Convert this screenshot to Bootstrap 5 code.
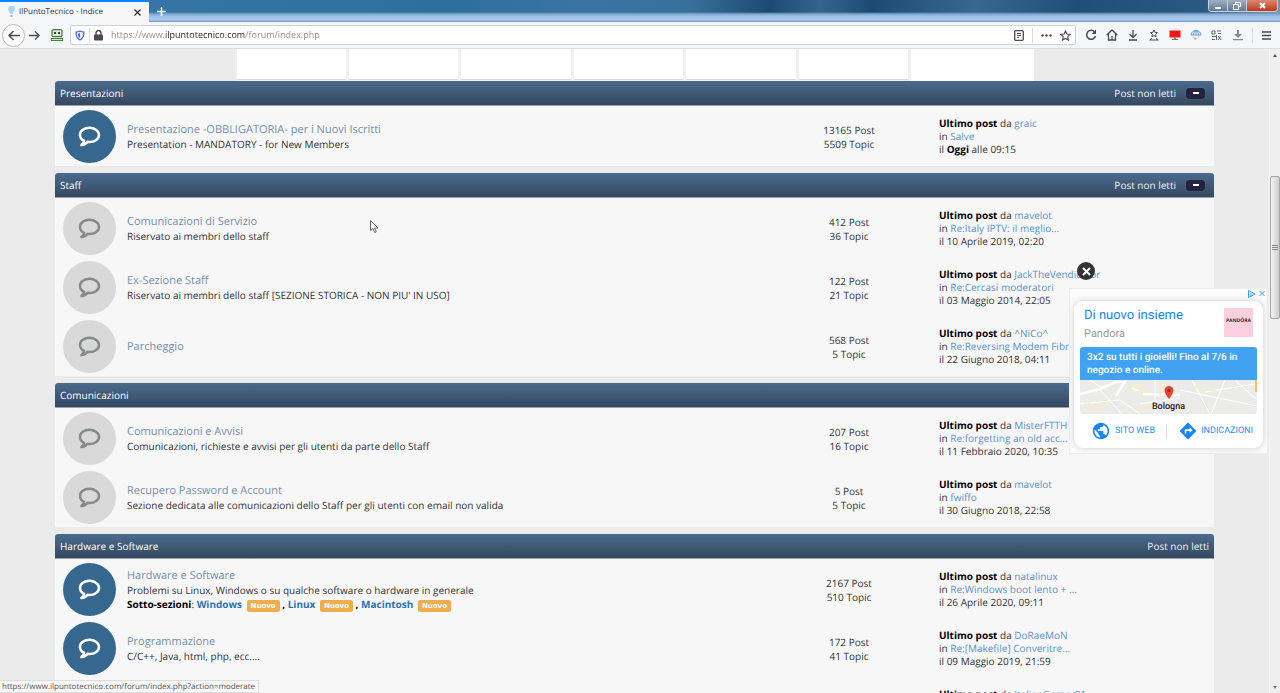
<!DOCTYPE html>
<html lang="it">
<head>
<meta charset="utf-8">
<meta name="viewport" content="width=device-width, initial-scale=1">
<title>IlPuntoTecnico - Indice</title>
<link href="https://cdn.jsdelivr.net/npm/bootstrap@5.3.0/dist/css/bootstrap.min.css" rel="stylesheet">
<style>
body{font-family:"Open Sans","Noto Sans",sans-serif;font-size:10px;line-height:14px;color:#333;background:#ebebeb;text-rendering:geometricPrecision}
a{text-decoration:none}
/* browser frame */
.titlebar{height:22px;background:linear-gradient(180deg,transparent 0 12px,#7fa6cf 14px,#a6c6ec 17px,#a6c6ec 20px,#6f97c2 22px),linear-gradient(100deg,#3a78a8 0,#2d6f9f 35%,#3a74a5 46%,#36709a 54%,#1d4a73 60%,#33658f 64%,#1d4a73 68%,#39688f 76%,#1f4f78 84%,#2a5a82 94%,#7b93ac 100%)}
.tab{width:149px;background:#f5f6f7;border-top:2px solid #0a84ff;color:#333;font-size:8px;padding-left:8px}
.plain{border:0;background:none;padding:0;line-height:1;color:inherit;display:inline-flex;align-items:center;justify-content:center}
.winbtns{height:12px;margin-right:2px;border:1px solid #c5d0dc;border-top:0;border-radius:0 0 4px 4px;overflow:hidden}
.winbtns button{width:19px;background:linear-gradient(#9fb0c4,#5f7891);border-right:1px solid #c5d0dc}
.winbtns .quit{width:30px;background:linear-gradient(#d98a72,#bd3a1c);border-right:0}
.toolbar{height:27px;padding-left:2px;background:#f5f6f7;border-bottom:1px solid #dcdcdc;color:#4a4a4f}
.backbtn{width:23px;height:23px;border:1px solid #b9b9ba;border-radius:50%;background:#fcfcfc}
.addon{margin:0 7px 0 11px}
.urlbox{height:20px;border:1px solid #d2d2d4;border-radius:2px;background:#fff}
.urltext{min-width:0;border:0;outline:0;font:9px/14px "Open Sans",sans-serif;padding:0;color:transparent;background:linear-gradient(90deg,#8a8a8a 54px,#222 54px,#222 134px,#8a8a8a 134px);-webkit-background-clip:text;background-clip:text}
.vline{width:1px;height:15px;background:#dcdcdc}
.toolbar svg{display:block}
.tools{padding-left:4px}
.tools .plain{width:21px}
.tools .vline{margin-left:4px}
.tools .menu{width:27px}
/* page */
.strip{width:63%;height:32px;background:#f0f0f0;gap:3px;padding-left:2px}
.strip div{flex:110;background:#fff;height:31px;border-bottom:1px solid #d8d8d8}
.strip div:last-child{flex:124;height:32px;border:0}
.board{padding:0 55px}
.forum{margin-bottom:7px;background:#f7f7f7}
.bar{height:25px;padding:0 5px;border-radius:3px 3px 0 0;border-bottom:1px solid #9aa3ad;background:linear-gradient(#4b6b8e,#34485f);color:#fff;font-weight:500}
.bar h2{font-size:10px;font-weight:500;margin:0;line-height:14px}
.bar a{color:#f0f3f6}
.fold{width:19px;height:11px;margin:0 4px 0 10px;border:0;border-radius:3px;background:#23233f;box-shadow:0 0 1px #7d92a8;padding:0}
.fold i{display:block;width:6px;height:2px;margin:auto;background:#fff}
.rows{table-layout:fixed;width:100%;margin-top:1px;color:#333}
.rows td{height:59px;padding:0;vertical-align:middle}
.c-icon{width:72px}.c-stat{width:180px}.c-last{width:275px}
.disc{width:53px;height:53px;margin-left:8px;border-radius:50%;background:#d9d9d9;color:#868a88}
.disc.on{background:#36688f;color:#fff}
.topic{font-size:11px;color:#7590ab}
.last{line-height:13px;white-space:nowrap}
.last a{color:#5b93c9}
b{color:#000}
b a{color:#2d73b3}
.tagnew{display:inline-block;background:#f0ad4e;color:#fff;font:bold 7px/12px "DejaVu Sans",sans-serif;padding:0 4px;border-radius:2px;margin-left:2px}
/* scrollbar */
.scroller{width:11px;background:#efefef;border-left:1px solid #f7f7f7}
.above{flex:115}
.below{flex:362}
.thumb{height:143px;border:1px solid #a5a5a5;border-radius:2px;background:linear-gradient(90deg,#f3f3f3,#cfcfcf)}
/* overlays */
.advert{right:12px;top:239px;width:199px;height:166px;background:#fbfbfb;border:1px solid #eee;font-family:Roboto,sans-serif;z-index:2}
.adcard{border-radius:9px;background:#fff;box-shadow:0 0 6px #ccc;margin:0 4px;padding:7px 6px 0}
.adhead{font-size:13px;line-height:16px;color:#1287f5}
.adsub{font-size:11px;color:#999;line-height:19px}
.brandbox{width:29px;height:29px;background:#fbcfe0;color:#333;font:bold 5px/5px "Open Sans",sans-serif;padding-bottom:3px}
.promo{background:#42a2f2;color:#fff;font-size:10px;font-weight:500;line-height:13px;padding:4px 7px 3px;border-radius:3px 3px 0 0}
.mapbox{height:34px;background:#ebebe9;border-radius:0 0 3px 3px;overflow:hidden}
.mappin{top:6px}
.mapname{font-size:9px;font-weight:500;color:#222;line-height:11px;bottom:1px}
.adlinks a{font-size:9px;color:#2a8ff5;flex:1}
.shut{right:185px;top:213px;width:18px;height:18px;border-radius:50%;background:#333;z-index:3;color:#fff}
.status{left:0;bottom:0;height:13px;padding:0 3px 0 2px;background:#f7f7f7;border:1px solid #ddd;border-left:0;font-size:8px;line-height:12px;color:#555;z-index:3}
.pointer{left:370px;top:171px}
</style>
</head>
<body class="vh-100 overflow-hidden d-flex flex-column">
<svg class="d-none"><symbol id="talk" viewBox="0 0 23 21"><path fill="none" stroke="currentColor" stroke-width="2.500" stroke-linejoin="round" d="M11.500 1.800C6.300 1.800 2 4.900 2 8.900c0 2.500 1.600 4.700 4.100 5.900-.3 1.700-1.200 3.100-2.700 4.300 2.700-.2 4.700-1.300 6.200-3.300.6.1 1.200.2 1.900.2 5.200 0 9.500-3.200 9.500-7.100s-4.300-7.100-9.500-7.100z"/></symbol></svg>

<header class="flex-shrink-0">
  <div class="titlebar d-flex">
    <div class="tab d-flex align-items-center">
      <svg width="7" height="12" viewBox="0 0 7 12"><path d="M3.500 0a3 3 0 0 0-2 5.500L2 8h3l.5-2.500A3 3 0 0 0 3.500 0z" fill="#a9d6f2"/><path d="M2.500 9h2v2h-2z" fill="#8fb4cc"/></svg>
      <span class="ms-1 flex-grow-1">IlPuntoTecnico - Indice</span>
      <button class="plain me-2" aria-label="Chiudi scheda"><svg width="7" height="7" viewBox="0 0 7 7" stroke="#333" stroke-width="1.300"><path d="M.5.5l6 6M6.500.5l-6 6"/></svg></button>
    </div>
    <button class="plain text-white ms-2 px-0 align-self-center" aria-label="Nuova scheda"><svg width="9" height="9" viewBox="0 0 9 9" stroke="#fff" stroke-width="1.500"><path d="M4.500 0v9M0 4.500h9"/></svg></button>
    <div class="winbtns d-flex ms-auto">
      <button class="plain" aria-label="Riduci"><svg width="8" height="8"><path d="M1 5h6v2H1z" fill="#fff"/></svg></button>
      <button class="plain" aria-label="Ripristina"><svg width="8" height="8" fill="none" stroke="#fff"><path d="M2.500 2V.5h5v4H6M.5 2.500h5v5h-5z"/></svg></button>
      <button class="plain quit" aria-label="Chiudi"><svg width="7" height="7" stroke="#fff" stroke-width="2"><path d="M1 1l5 5M6 1L1 6"/></svg></button>
    </div>
  </div>
  <div class="toolbar d-flex align-items-center">
    <button class="plain backbtn me-1" aria-label="Indietro"><svg width="12" height="11" viewBox="0 0 12 11" fill="none" stroke="currentColor" stroke-width="1.500"><path d="M12 5.500H1M5.500 1L1 5.500 5.500 10"/></svg></button>
    <button class="plain" aria-label="Avanti"><svg width="11" height="11" viewBox="0 0 12 11" fill="none" stroke="currentColor" stroke-width="1.500"><path d="M0 5.500h11M6.500 1L11 5.500 6.500 10"/></svg></button>
    <button class="plain addon" aria-label="Estensione"><svg width="12" height="12" viewBox="0 0 12 12"><rect x="1" y=".7" width="10" height="7" rx="1" fill="#dcebd2" stroke="#33512c"/><path d="M3 3h2v2H3zM7 3h2v2H7z" fill="#33512c"/><path d="M0 9h12v3H0z" fill="#3c8a35"/><path d="M1 10.500h10" stroke="#cfe8c8"/></svg></button>
    <div class="urlbox d-flex align-items-center flex-grow-1">
      <svg class="ms-1 me-1" width="10" height="11" viewBox="0 0 10 11"><path d="M5 1c1.500.8 2.600 1 4 1 0 4-1 6.500-4 8C2 8.500 1 6 1 2c1.400 0 2.500-.2 4-1z" fill="#eef" stroke="#3f5fd0" stroke-width="1.200"/><path d="M5 3.200v5C3.600 7 3 5.700 3 3.700z" fill="#3f5fd0"/></svg>
      <span class="vline"></span>
      <svg class="ms-1 me-2" width="9" height="11" viewBox="0 0 9 11"><rect y="4.500" width="9" height="6" rx="1" fill="#4a4a4f"/><path d="M2 5V3a2.500 2.500 0 0 1 5 0v2" fill="none" stroke="#4a4a4f" stroke-width="1.400"/></svg>
      <input type="text" class="urltext flex-grow-1" aria-label="Indirizzo" value="https://www.ilpuntotecnico.com/forum/index.php">
      <svg width="10" height="11" viewBox="0 0 10 11" fill="none" stroke="currentColor"><rect x=".7" y=".7" width="8.600" height="9.600" rx="1" stroke-width="1.300"/><path d="M3 3.500h4M3 5.500h4M3 7.500h2"/></svg>
      <span class="vline mx-2"></span>
      <svg class="me-2" width="11" height="3" fill="currentColor"><circle cx="1.500" cy="1.500" r="1.200"/><circle cx="5.500" cy="1.500" r="1.200"/><circle cx="9.500" cy="1.500" r="1.200"/></svg>
      <svg class="me-1" width="11" height="11" viewBox="0 0 12 12" fill="none" stroke="currentColor" stroke-width="1.200"><path d="M6 1l1.500 3.400 3.700.4-2.700 2.500.7 3.700L6 9.200 2.800 11l.7-3.700L.8 4.800l3.700-.4z"/></svg>
    </div>
    <div class="tools d-flex align-items-center">
      <button class="plain" aria-label="Ricarica"><svg width="12" height="12" viewBox="0 0 12 12" fill="none" stroke="currentColor" stroke-width="1.500"><path d="M10 3.500A4.500 4.500 0 1 0 10.500 7"/><path d="M11 .5V5H6.800z" fill="currentColor" stroke="none"/></svg></button>
      <button class="plain" aria-label="Pagina iniziale"><svg width="12" height="12" viewBox="0 0 12 12" fill="none" stroke="currentColor" stroke-width="1.300"><path d="M.7 6L6 1l5.300 5M2.500 5v6h7V5M6 11V7"/></svg></button>
      <button class="plain" aria-label="Download"><svg width="10" height="12" viewBox="0 0 10 12" fill="none" stroke="currentColor" stroke-width="1.300"><path d="M5 1v7M1.500 5L5 8.500 8.500 5M1 11h8"/></svg></button>
      <button class="plain" aria-label="Segnalibri"><svg width="12" height="12" viewBox="0 0 12 12" fill="none" stroke="currentColor"><path d="M6 1l1 2.300 2.500.3-1.800 1.700.4 2.500L6 6.600 3.900 7.800l.4-2.500-1.800-1.700L5 3.300zM1.500 11h9M2.500 11l1-2M9.500 11l-1-2"/></svg></button>
      <button class="plain" aria-label="Schermo"><svg width="12" height="11" viewBox="0 0 12 11"><path d="M.5.5h11v7H.5z" fill="#ff1414"/><path d="M5 7.500h2V9h2v1H3V9h2z" fill="#777"/></svg></button>
      <button class="plain" aria-label="Traduci"><svg width="12" height="12" viewBox="0 0 12 12" fill="none" stroke="#5d9be0"><path d="M1 6a5 4.500 0 0 1 10 0zM6 1.500V6M3.500 6c0-2 1-4 2.500-4.500C7.500 2 8.500 4 8.500 6"/><path d="M3 7.500c1 3 4 3 6 0M5 8v3" stroke="#b4bcc5"/></svg></button>
      <button class="plain" aria-label="Codice QR"><svg width="11" height="11" viewBox="0 0 11 11" fill="none" stroke="#666"><path d="M1 1h3v3H1zM6 1h4M7 3.500h3M1 6.500h4M7 6l3 4M1 9.500h3M5.500 5v5M7 10l3-4"/></svg></button>
      <button class="plain" aria-label="Salva"><svg width="10" height="12" viewBox="0 0 10 12" fill="#85898d"><path d="M4 1h2v4h3L5 9 1 5h3zM0 10h10v1.300H0z"/></svg></button>
      <span class="vline"></span>
      <button class="plain menu" aria-label="Menu"><svg width="9" height="9" stroke="currentColor" stroke-width="1.300"><path d="M0 1h9M0 4.500h9M0 8h9"/></svg></button>
    </div>
  </div>
</header>

<div class="position-relative d-flex flex-grow-1 overflow-hidden">
  <main class="flex-grow-1 overflow-hidden">
    <div class="strip d-flex mx-auto"><div></div><div></div><div></div><div></div><div></div><div></div><div></div></div>
    <div class="board">

      <section class="forum">
        <div class="bar d-flex align-items-center justify-content-between"><h2>Presentazioni</h2><div class="d-flex align-items-center"><a href="#">Post non letti</a><button class="fold" aria-label="Comprimi"><i></i></button></div></div>
        <table class="rows"><colgroup><col class="c-icon"><col><col class="c-stat"><col class="c-last"></colgroup>
          <tr><td><div class="disc on d-flex align-items-center justify-content-center"><svg width="23" height="21"><use href="#talk"/></svg></div></td>
            <td><a class="topic" href="#">Presentazione -OBBLIGATORIA- per i Nuovi Iscritti</a><div>Presentation - MANDATORY - for New Members</div></td>
            <td class="text-center">13165 Post<br>5509 Topic</td>
            <td class="last"><b>Ultimo post</b> da <a href="#">graic</a><br>in <a href="#">Salve</a><br>il <b>Oggi</b> alle 09:15</td></tr>
        </table>
      </section>

      <section class="forum">
        <div class="bar d-flex align-items-center justify-content-between"><h2>Staff</h2><div class="d-flex align-items-center"><a href="#">Post non letti</a><button class="fold" aria-label="Comprimi"><i></i></button></div></div>
        <table class="rows"><colgroup><col class="c-icon"><col><col class="c-stat"><col class="c-last"></colgroup>
          <tr><td><div class="disc d-flex align-items-center justify-content-center"><svg width="23" height="21"><use href="#talk"/></svg></div></td>
            <td><a class="topic" href="#">Comunicazioni di Servizio</a><div>Riservato ai membri dello staff</div></td>
            <td class="text-center">412 Post<br>36 Topic</td>
            <td class="last"><b>Ultimo post</b> da <a href="#">mavelot</a><br>in <a href="#">Re:Italy IPTV: il meglio...</a><br>il 10 Aprile 2019, 02:20</td></tr>
          <tr><td><div class="disc d-flex align-items-center justify-content-center"><svg width="23" height="21"><use href="#talk"/></svg></div></td>
            <td><a class="topic" href="#">Ex-Sezione Staff</a><div>Riservato ai membri dello staff [SEZIONE STORICA - NON PIU' IN USO]</div></td>
            <td class="text-center">122 Post<br>21 Topic</td>
            <td class="last"><b>Ultimo post</b> da <a href="#">JackTheVendicator</a><br>in <a href="#">Re:Cercasi moderatori</a><br>il 03 Maggio 2014, 22:05</td></tr>
          <tr><td><div class="disc d-flex align-items-center justify-content-center"><svg width="23" height="21"><use href="#talk"/></svg></div></td>
            <td><a class="topic" href="#">Parcheggio</a></td>
            <td class="text-center">568 Post<br>5 Topic</td>
            <td class="last"><b>Ultimo post</b> da <a href="#">^NiCo^</a><br>in <a href="#">Re:Reversing Modem Fibra</a><br>il 22 Giugno 2018, 04:11</td></tr>
        </table>
      </section>

      <section class="forum">
        <div class="bar d-flex align-items-center"><h2>Comunicazioni</h2></div>
        <table class="rows"><colgroup><col class="c-icon"><col><col class="c-stat"><col class="c-last"></colgroup>
          <tr><td><div class="disc d-flex align-items-center justify-content-center"><svg width="23" height="21"><use href="#talk"/></svg></div></td>
            <td><a class="topic" href="#">Comunicazioni e Avvisi</a><div>Comunicazioni, richieste e avvisi per gli utenti da parte dello Staff</div></td>
            <td class="text-center">207 Post<br>16 Topic</td>
            <td class="last"><b>Ultimo post</b> da <a href="#">MisterFTTH</a><br>in <a href="#">Re:forgetting an old acc...</a><br>il 11 Febbraio 2020, 10:35</td></tr>
          <tr><td><div class="disc d-flex align-items-center justify-content-center"><svg width="23" height="21"><use href="#talk"/></svg></div></td>
            <td><a class="topic" href="#">Recupero Password e Account</a><div>Sezione dedicata alle comunicazioni dello Staff per gli utenti con email non valida</div></td>
            <td class="text-center">5 Post<br>5 Topic</td>
            <td class="last"><b>Ultimo post</b> da <a href="#">mavelot</a><br>in <a href="#">fwiffo</a><br>il 30 Giugno 2018, 22:58</td></tr>
        </table>
      </section>

      <section class="forum">
        <div class="bar d-flex align-items-center justify-content-between"><h2>Hardware e Software</h2><a href="#">Post non letti</a></div>
        <table class="rows"><colgroup><col class="c-icon"><col><col class="c-stat"><col class="c-last"></colgroup>
          <tr><td><div class="disc on d-flex align-items-center justify-content-center"><svg width="23" height="21"><use href="#talk"/></svg></div></td>
            <td><a class="topic" href="#">Hardware e Software</a><div>Problemi su Linux, Windows o su qualche software o hardware in generale</div><div><b>Sotto-sezioni</b>: <b><a href="#">Windows</a> <span class="tagnew">Nuovo</span> , <a href="#">Linux</a> <span class="tagnew">Nuovo</span> , <a href="#">Macintosh</a> <span class="tagnew">Nuovo</span></b></div></td>
            <td class="text-center">2167 Post<br>510 Topic</td>
            <td class="last"><b>Ultimo post</b> da <a href="#">natalinux</a><br>in <a href="#">Re:Windows boot lento + ...</a><br>il 26 Aprile 2020, 09:11</td></tr>
          <tr><td><div class="disc on d-flex align-items-center justify-content-center"><svg width="23" height="21"><use href="#talk"/></svg></div></td>
            <td><a class="topic" href="#">Programmazione</a><div>C/C++, Java, html, php, ecc....</div></td>
            <td class="text-center">172 Post<br>41 Topic</td>
            <td class="last"><b>Ultimo post</b> da <a href="#">DoRaeMoN</a><br>in <a href="#">Re:[Makefile] Converitre...</a><br>il 09 Maggio 2019, 21:59</td></tr>
          <tr><td></td><td></td><td></td>
            <td class="last"><b>Ultimo post</b> da <a href="#">ItalianGamer81</a><br>&nbsp;<br>&nbsp;</td></tr>
        </table>
      </section>
    </div>
  </main>

  <div class="scroller d-flex flex-column flex-shrink-0" aria-hidden="true">
    <svg width="10" height="12"><path d="M3 8l2-3 2 3z" fill="#555"/></svg>
    <div class="above"></div>
    <div class="thumb d-flex align-items-center justify-content-center"><svg width="6" height="7" stroke="#888"><path d="M0 1.500h6M0 3.500h6M0 5.500h6"/></svg></div>
    <div class="below"></div>
    <svg width="10" height="12"><path d="M3 5l2 3 2-3z" fill="#777"/></svg>
  </div>

  <button class="plain shut position-absolute" aria-label="Chiudi annuncio"><svg width="9" height="9" stroke="#fff" stroke-width="2"><path d="M1 1l7 7M8 1L1 8"/></svg></button>
  <aside class="advert position-absolute">
    <div class="d-flex justify-content-end align-items-center"><svg width="20" height="12" viewBox="0 0 20 12" fill="none" stroke="#2ba3d6"><path d="M1.500 1.500L8 5 1.500 8.500zM4 4v3M12.500 2l5 5M17.500 2l-5 5"/></svg></div>
    <div class="adcard">
      <div class="d-flex justify-content-between px-1">
        <div><div class="adhead">Di nuovo insieme</div><div class="adsub">Pandora</div></div>
        <div class="brandbox d-flex align-items-center justify-content-center">PANDÖRA</div>
      </div>
      <div class="promo mt-1">3x2 su tutti i gioielli! Fino al 7/6 in<br>negozio e online.</div>
      <div class="mapbox position-relative d-flex justify-content-center">
        <svg class="w-100 h-100" viewBox="0 0 177 34" preserveAspectRatio="none" fill="none" stroke="#fff"><path d="M0 14l20-5 16-7 10 0M46 0l-10 16M52 8l12 6 36 1" stroke-width="2.500"/><path d="M20 10l22 24M10 0l12 8M112 0l18 34M100 10l77 16M145 0l-14 34M0 24l40-4 20 14M75 0v34M155 0l22 20M60 24l40-6M125 12l50-8"/><path d="M4 22l20 10M5 28l25-6M45 8l20-4M50 13l22-2M62 4v12M85 0l-5 15M100 26l12 6M110 6l26 5M55 30l20-4" stroke="#f3eeca" stroke-width="2"/><path d="M176 0v12" stroke="#f2c069" stroke-width="2"/></svg>
        <svg class="mappin position-absolute" width="10" height="13" viewBox="0 0 10 13"><path d="M5 0a4.500 4.500 0 0 0-4.500 4.500C.5 7.500 5 13 5 13s4.500-5.500 4.500-8.500A4.500 4.500 0 0 0 5 0z" fill="#ea4335"/><circle cx="5" cy="4.500" r="1.600" fill="#a3221a"/></svg>
        <span class="mapname position-absolute">Bologna</span>
      </div>
      <div class="adlinks d-flex align-items-center py-2">
        <a href="#" class="d-flex align-items-center justify-content-center"><svg class="me-1" width="20" height="18" viewBox="1 1 22 22" fill="#1287f5"><path d="M12 2C6.480 2 2 6.480 2 12s4.480 10 10 10 10-4.480 10-10S17.520 2 12 2zm-1 17.930c-3.950-.49-7-3.850-7-7.930 0-.62.080-1.210.210-1.790L9 15v1c0 1.100.9 2 2 2v1.930zm6.900-2.540c-.26-.81-1-1.390-1.900-1.390h-1v-3c0-.55-.45-1-1-1H8v-2h2c.55 0 1-.45 1-1V7h2c1.100 0 2-.9 2-2v-.41c2.930 1.190 5 4.060 5 7.410 0 2.080-.8 3.970-2.100 5.390z"/></svg>SITO WEB</a>
        <span class="vline"></span>
        <a href="#" class="d-flex align-items-center justify-content-end pe-1"><svg class="me-1" width="18" height="18" viewBox="1 1 22 22" fill="#1287f5"><path d="M21.710 11.290l-9-9c-.39-.39-1.020-.39-1.410 0l-9 9c-.39.39-.39 1.020 0 1.410l9 9c.39.390 1.020.390 1.410 0l9-9c.39-.38.39-1.010 0-1.410zM14 14.500V12h-4v3H8v-4c0-.55.45-1 1-1h5V7.500l3.500 3.500-3.500 3.500z"/></svg>INDICAZIONI</a>
      </div>
    </div>
  </aside>
  <svg class="pointer position-absolute" width="9" height="14" viewBox="0 0 9 14"><path d="M.5.5v10l2.500-2 1.700 4 1.600-.7-1.700-3.800H8z" fill="#fff" stroke="#666"/></svg>
  <div class="status position-absolute">https://www.ilpuntotecnico.com/forum/index.php?action=moderate</div>
</div>
<script src="https://cdn.jsdelivr.net/npm/bootstrap@5.3.0/dist/js/bootstrap.bundle.min.js"></script>
</body>
</html>
